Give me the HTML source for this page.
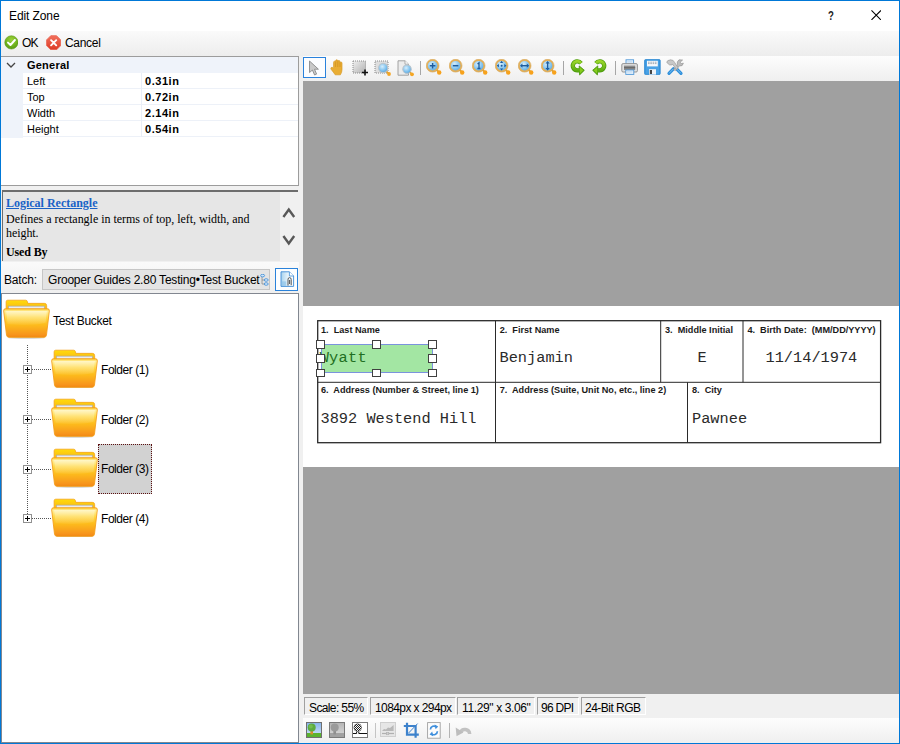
<!DOCTYPE html>
<html lang="en">
<head>
<meta charset="utf-8">
<title>Edit Zone</title>
<style>
html,body{margin:0;padding:0;}
body{width:900px;height:744px;overflow:hidden;background:#fff;font-family:"Liberation Sans",sans-serif;font-size:12px;color:#000;}
#win{position:absolute;left:0;top:0;width:900px;height:744px;background:#fff;overflow:hidden;}
#win div,#win span,#win svg{position:absolute;}
.t{white-space:nowrap;line-height:1;}
/* window frame */
#bl{left:0;top:0;width:1.35px;height:744px;background:#0078d7;}
#br{left:898.65px;top:0;width:1.35px;height:744px;background:#0078d7;}
#bt{left:0;top:0;width:900px;height:1.3px;background:#0078d7;}
#bb{left:0;top:742.7px;width:900px;height:1.3px;background:#0078d7;}
/* main toolbar */
#tb1{left:1px;top:31px;width:898px;height:25px;background:linear-gradient(#fafafa,#ededed);}
/* left pane */
#left{left:1px;top:56px;width:302px;height:687px;background:#f0f0f0;}
#pgrid{left:0;top:0;width:297px;height:128px;border:1px solid #9c9c9c;border-left:none;background:#fff;}
#pgrid .hdr{left:0;top:0;width:297px;height:16px;background:#eff3fa;}
#pgrid .ind{left:0;top:16px;width:22px;height:65px;background:#eff3fa;}
#pgrid .row{left:22px;width:275px;height:15px;border-bottom:1px solid #edf1f8;}
#pgrid .vs{left:140px;top:16px;width:1px;height:64px;background:#e9eef7;}
#pgrid .n{font-size:11px;left:26px;}
#pgrid .v{font-size:11px;left:144px;font-weight:bold;letter-spacing:0.55px;}
/* help */
#help{left:1px;top:134px;width:295.5px;height:71px;background:#e6e6e6;border-top:2px solid #6d6d6d;border-left:1px solid #6d6d6d;box-sizing:border-box;}
#help .sb{left:277px;top:0;width:18px;height:69px;background:#f0f0f0;}
#help .t{font-family:"Liberation Serif",serif;font-size:12px;}
/* batch */
#combo{left:41px;top:213px;width:228px;height:21px;box-sizing:border-box;border:1px solid #c6c6c6;background:#e4e4e4;overflow:hidden;}
#bbtn{left:274px;top:212px;width:23px;height:23px;box-sizing:border-box;border:1px solid #2a82da;background:#fdfeff;}
/* tree */
#tree{left:0px;top:237px;width:296px;height:448px;background:#fff;border:1px solid #828790;}
.tl{font-size:12px;}
.exp{width:9px;height:9px;box-sizing:border-box;border:1px solid #919191;background:#fff;}
.vdot{width:1px;background:repeating-linear-gradient(to bottom,#555 0 1px,transparent 1px 2px);}
.hdot{height:1px;background:repeating-linear-gradient(to right,#555 0 1px,transparent 1px 2px);}
.sel{box-sizing:border-box;background:#d2d2d2;border:1px dotted #5a1010;}
/* viewer */
#vtb{left:303px;top:56px;width:596px;height:24.6px;background:linear-gradient(#fdfdfd,#efefef);}
#view{left:303px;top:80.6px;width:596px;height:613.4px;background:#a0a0a0;}
#doc{left:0;top:225.4px;width:596px;height:161px;background:#fff;}
#status{left:303px;top:694px;width:596px;height:24px;background:#f0f0f0;}
#status .p{top:3px;height:18px;box-sizing:border-box;border:1px solid;border-color:#a0a0a0 #fff #fff #a0a0a0;}
#status .t{top:8px;font-size:12px;}
#btb{left:303px;top:718px;width:596px;height:25px;background:linear-gradient(#fdfdfd,#efefef);}
.lbl{font-weight:bold;font-size:9.15px;color:#1a1a1a;}
.hd{width:8.6px;height:8.6px;box-sizing:border-box;background:#fff;border:1.1px solid #404040;}
.ocr{font-family:"Liberation Mono",monospace;font-size:15.3px;color:#2a2a2a;}
#title{letter-spacing:-0.097px;}
#ok{letter-spacing:-0.922px;}
#cancel{letter-spacing:-0.310px;}
#gen{letter-spacing:0.219px;}
#h1{letter-spacing:-0.009px;}
#h2{letter-spacing:-0.021px;}
#h3{letter-spacing:-0.071px;}
#h4{letter-spacing:-0.121px;}
#batch{letter-spacing:-0.205px;}
#cbt{letter-spacing:-0.204px;}
#s1{letter-spacing:-0.620px;}
#s2{letter-spacing:-0.588px;}
#s3{letter-spacing:-0.371px;}
#s4{letter-spacing:-0.698px;}
#s5{letter-spacing:-0.519px;}
#tb_root{letter-spacing:-0.321px;}
#tf1{letter-spacing:-0.452px;}
#tf2{letter-spacing:-0.452px;}
#tf3{letter-spacing:-0.452px;}
#tf4{letter-spacing:-0.452px;}
</style>
</head>
<body>
<div id="win">
  <!-- title bar -->
  <span class="t" id="title" style="left:9px;top:10px;font-size:12px;">Edit Zone</span>
  <span class="t" id="qm" style="left:828px;top:9.5px;font-size:12px;font-weight:bold;transform:scaleX(0.8);transform-origin:0 0;color:#222">?</span>
  <svg id="xbtn" style="left:871px;top:9.8px;" width="10.4" height="10.4" viewBox="0 0 11 11"><path d="M0.5 0.5 L10.5 10.5 M10.5 0.5 L0.5 10.5" stroke="#000" stroke-width="1.1" fill="none"/></svg>

  <div id="tb1">
    <svg style="left:2.6px;top:4.4px" width="14.8" height="14.8" viewBox="0 0 16 16"><defs><radialGradient id="gok" cx="0.5" cy="0.3" r="0.8"><stop offset="0" stop-color="#9bd13a"/><stop offset="0.6" stop-color="#6db01c"/><stop offset="1" stop-color="#4e8f10"/></radialGradient></defs><circle cx="8" cy="8" r="7.2" fill="url(#gok)" stroke="#5a9a14" stroke-width="0.6"/><path d="M4.3 8.2 L7 10.8 L11.8 5.4" fill="none" stroke="#fff" stroke-width="2.1" stroke-linecap="round" stroke-linejoin="round"/></svg>
    <span class="t" id="ok" style="left:21px;top:5.5px;">OK</span>
    <svg style="left:44.7px;top:3.5px" width="15.3" height="15.5" viewBox="0 0 16 16"><defs><linearGradient id="gcn" x1="0" y1="0" x2="0" y2="1"><stop offset="0" stop-color="#f2705c"/><stop offset="1" stop-color="#dc3b26"/></linearGradient></defs><path d="M5 0.6 H11 L15.4 5 V11 L11 15.4 H5 L0.6 11 V5 Z" fill="url(#gcn)" stroke="#e9604d" stroke-width="0.8"/><path d="M5.3 5.3 L10.7 10.7 M10.7 5.3 L5.3 10.7" stroke="#fff" stroke-width="2" stroke-linecap="round"/></svg>
    <span class="t" id="cancel" style="left:64px;top:5.5px;">Cancel</span>
  </div>

  <div id="left">
    <div id="pgrid">
      <div class="hdr"></div><div class="ind"></div>
      <div class="row" style="top:16px"></div><div class="row" style="top:32px"></div><div class="row" style="top:48px"></div><div class="row" style="top:64px"></div>
      <div class="vs"></div>
      <svg style="left:5px;top:5px" width="10" height="7" viewBox="0 0 10 7"><path d="M1 1 L5 5 L9 1" fill="none" stroke="#444" stroke-width="1.3"/></svg>
      <span class="t" id="gen" style="left:26px;top:3px;font-size:11px;font-weight:bold;">General</span>
      <span class="t n" style="top:19px">Left</span><span class="t v" style="top:19px">0.31in</span>
      <span class="t n" style="top:35px">Top</span><span class="t v" style="top:35px">0.72in</span>
      <span class="t n" style="top:51px">Width</span><span class="t v" style="top:51px">2.14in</span>
      <span class="t n" style="top:67px">Height</span><span class="t v" style="top:67px">0.54in</span>
    </div>
    <div id="help">
      <div class="sb"></div>
      <svg style="left:277px;top:0" width="18" height="69" viewBox="0 0 18 69"><path d="M3.4 25 L8.8 17.6 L14.2 25 M3.4 44 L8.8 51.4 L14.2 44" fill="none" stroke="#585858" stroke-width="2.4"/></svg>
      <span class="t" id="h1" style="left:3px;top:5px;font-weight:bold;color:#1a62c6;text-decoration:underline;">Logical Rectangle</span>
      <span class="t" id="h2" style="left:3px;top:21px;">Defines a rectangle in terms of top, left, width, and</span>
      <span class="t" id="h3" style="left:3px;top:35px;">height.</span>
      <span class="t" id="h4" style="left:3px;top:54px;font-weight:bold;">Used By</span>
    </div>
    <div style="left:0;top:206px;width:298px;height:31px;background:linear-gradient(#fafafa,#efefef)"></div>
    <span class="t" id="batch" style="left:3px;top:218px;">Batch:</span>
    <div id="combo"><span class="t" id="cbt" style="left:5px;top:4px;">Grooper Guides 2.80 Testing•Test Bucket</span>
      <svg style="left:216.5px;top:3.5px" width="9" height="12" viewBox="0 0 9 12"><path d="M2 2.2 V10 H5 M2 6 H5" fill="none" stroke="#8a8a8a" stroke-width="0.8"/><ellipse cx="2.6" cy="1.6" rx="2" ry="1.3" fill="#cfe6fa" stroke="#3d8bd6" stroke-width="0.8"/><ellipse cx="6.2" cy="6" rx="2" ry="1.3" fill="#cfe6fa" stroke="#3d8bd6" stroke-width="0.8"/><ellipse cx="6.2" cy="10" rx="2" ry="1.3" fill="#cfe6fa" stroke="#3d8bd6" stroke-width="0.8"/></svg>
    </div>
    <div id="bbtn"><svg style="left:3.5px;top:1.8px" width="15" height="17" viewBox="0 0 15 17"><defs><linearGradient id="pg" x1="0" y1="0" x2="1" y2="0"><stop offset="0" stop-color="#a9d3ee"/><stop offset="0.55" stop-color="#e6f3fb"/><stop offset="1" stop-color="#ffffff"/></linearGradient></defs><path d="M1 0.8 H9.4 L13.6 5 V15.4 H1 Z" fill="url(#pg)" stroke="#3d8bd6" stroke-width="0.9"/><path d="M9.4 0.8 V5 H13.6" fill="#fff" stroke="#3d8bd6" stroke-width="0.8"/><rect x="1.6" y="10.4" width="4.6" height="4.4" fill="#8fc3e8" opacity="0.7"/><path d="M8 14.6 V8.6 Q8 6.6 9.6 6.6 Q11.2 6.6 11.2 8.6 V14.2 M9.6 13 V9" fill="none" stroke="#555" stroke-width="1"/></svg></div>
    <div id="tree">
<svg style="left:1.2999999999999998px;top:4.899999999999977px" width="47" height="39.7" viewBox="0 0 48 40" preserveAspectRatio="none">
<defs>
<linearGradient id="fb" x1="0" y1="0" x2="0" y2="1"><stop offset="0" stop-color="#ffdc0a"/><stop offset="1" stop-color="#f9a81a"/></linearGradient>
<linearGradient id="ff" x1="0" y1="0" x2="0" y2="1"><stop offset="0" stop-color="#ffc928"/><stop offset="0.09" stop-color="#fff0a0"/><stop offset="0.3" stop-color="#ffd94a"/><stop offset="0.55" stop-color="#fdbd1c"/><stop offset="0.92" stop-color="#f7931c"/><stop offset="1" stop-color="#f0860f"/></linearGradient>
<linearGradient id="fg" x1="0" y1="0" x2="0" y2="1"><stop offset="0" stop-color="#fff" stop-opacity="0.4"/><stop offset="1" stop-color="#fff" stop-opacity="0.05"/></linearGradient>
</defs>
<ellipse cx="24" cy="39" rx="19" ry="1.1" fill="#b9b9b9" opacity="0.7"/>
<path d="M4.8 1.2 H23 Q24.6 1.2 24.9 2.6 L25.3 4.4 H42.3 Q44.6 4.4 44.6 6.8 V14 H3.2 V2.8 Q3.2 1.2 4.8 1.2 Z" fill="url(#fb)" stroke="#f3a21a" stroke-width="0.8"/>
<rect x="5.6" y="7.2" width="36.6" height="4" fill="#ececec" stroke="#a9a9a9" stroke-width="0.7"/>
<path d="M2.6 9.8 H45.4 Q47.6 9.8 47.3 12 L44.4 36.4 Q44.1 38.6 41.9 38.6 H6.1 Q3.9 38.6 3.6 36.4 L0.7 12 Q0.4 9.8 2.6 9.8 Z" fill="url(#ff)" stroke="#f59e1a" stroke-width="0.9"/>
<path d="M3.2 12 H44.8 L43.4 24 Q30 27.5 4.8 25.5 Z" fill="url(#fg)"/>
</svg>
<span class="t tl" id="tb_root" style="left:51px;top:20.5px">Test Bucket</span>
<div class="vdot" style="left:25px;top:51px;height:173px"></div>
<div class="hdot" style="left:30px;top:75.40000000000003px;width:19px"></div>
<div class="exp" style="left:21.0px;top:71.40000000000003px"></div><div style="left:23.0px;top:75.40000000000003px;width:5px;height:1px;background:#000"></div><div style="left:25.0px;top:73.40000000000003px;width:1px;height:5px;background:#000"></div>
<svg style="left:48.6px;top:54.60000000000002px" width="47" height="39.7" viewBox="0 0 48 40" preserveAspectRatio="none">
<defs>
<linearGradient id="fb" x1="0" y1="0" x2="0" y2="1"><stop offset="0" stop-color="#ffdc0a"/><stop offset="1" stop-color="#f9a81a"/></linearGradient>
<linearGradient id="ff" x1="0" y1="0" x2="0" y2="1"><stop offset="0" stop-color="#ffc928"/><stop offset="0.09" stop-color="#fff0a0"/><stop offset="0.3" stop-color="#ffd94a"/><stop offset="0.55" stop-color="#fdbd1c"/><stop offset="0.92" stop-color="#f7931c"/><stop offset="1" stop-color="#f0860f"/></linearGradient>
<linearGradient id="fg" x1="0" y1="0" x2="0" y2="1"><stop offset="0" stop-color="#fff" stop-opacity="0.4"/><stop offset="1" stop-color="#fff" stop-opacity="0.05"/></linearGradient>
</defs>
<ellipse cx="24" cy="39" rx="19" ry="1.1" fill="#b9b9b9" opacity="0.7"/>
<path d="M4.8 1.2 H23 Q24.6 1.2 24.9 2.6 L25.3 4.4 H42.3 Q44.6 4.4 44.6 6.8 V14 H3.2 V2.8 Q3.2 1.2 4.8 1.2 Z" fill="url(#fb)" stroke="#f3a21a" stroke-width="0.8"/>
<rect x="5.6" y="7.2" width="36.6" height="4" fill="#ececec" stroke="#a9a9a9" stroke-width="0.7"/>
<path d="M2.6 9.8 H45.4 Q47.6 9.8 47.3 12 L44.4 36.4 Q44.1 38.6 41.9 38.6 H6.1 Q3.9 38.6 3.6 36.4 L0.7 12 Q0.4 9.8 2.6 9.8 Z" fill="url(#ff)" stroke="#f59e1a" stroke-width="0.9"/>
<path d="M3.2 12 H44.8 L43.4 24 Q30 27.5 4.8 25.5 Z" fill="url(#fg)"/>
</svg>
<span class="t tl" id="tf1" style="left:99px;top:69.90000000000003px">Folder (1)</span>
<div class="hdot" style="left:30px;top:125.05000000000001px;width:19px"></div>
<div class="exp" style="left:21.0px;top:121.05000000000001px"></div><div style="left:23.0px;top:125.05000000000001px;width:5px;height:1px;background:#000"></div><div style="left:25.0px;top:123.05000000000001px;width:1px;height:5px;background:#000"></div>
<svg style="left:48.6px;top:104.25px" width="47" height="39.7" viewBox="0 0 48 40" preserveAspectRatio="none">
<defs>
<linearGradient id="fb" x1="0" y1="0" x2="0" y2="1"><stop offset="0" stop-color="#ffdc0a"/><stop offset="1" stop-color="#f9a81a"/></linearGradient>
<linearGradient id="ff" x1="0" y1="0" x2="0" y2="1"><stop offset="0" stop-color="#ffc928"/><stop offset="0.09" stop-color="#fff0a0"/><stop offset="0.3" stop-color="#ffd94a"/><stop offset="0.55" stop-color="#fdbd1c"/><stop offset="0.92" stop-color="#f7931c"/><stop offset="1" stop-color="#f0860f"/></linearGradient>
<linearGradient id="fg" x1="0" y1="0" x2="0" y2="1"><stop offset="0" stop-color="#fff" stop-opacity="0.4"/><stop offset="1" stop-color="#fff" stop-opacity="0.05"/></linearGradient>
</defs>
<ellipse cx="24" cy="39" rx="19" ry="1.1" fill="#b9b9b9" opacity="0.7"/>
<path d="M4.8 1.2 H23 Q24.6 1.2 24.9 2.6 L25.3 4.4 H42.3 Q44.6 4.4 44.6 6.8 V14 H3.2 V2.8 Q3.2 1.2 4.8 1.2 Z" fill="url(#fb)" stroke="#f3a21a" stroke-width="0.8"/>
<rect x="5.6" y="7.2" width="36.6" height="4" fill="#ececec" stroke="#a9a9a9" stroke-width="0.7"/>
<path d="M2.6 9.8 H45.4 Q47.6 9.8 47.3 12 L44.4 36.4 Q44.1 38.6 41.9 38.6 H6.1 Q3.9 38.6 3.6 36.4 L0.7 12 Q0.4 9.8 2.6 9.8 Z" fill="url(#ff)" stroke="#f59e1a" stroke-width="0.9"/>
<path d="M3.2 12 H44.8 L43.4 24 Q30 27.5 4.8 25.5 Z" fill="url(#fg)"/>
</svg>
<span class="t tl" id="tf2" style="left:99px;top:119.55000000000001px">Folder (2)</span>
<div class="hdot" style="left:30px;top:174.70000000000005px;width:19px"></div>
<div class="exp" style="left:21.0px;top:170.70000000000005px"></div><div style="left:23.0px;top:174.70000000000005px;width:5px;height:1px;background:#000"></div><div style="left:25.0px;top:172.70000000000005px;width:1px;height:5px;background:#000"></div>
<div class="sel" style="left:96px;top:150px;width:54px;height:50px"></div>
<svg style="left:48.6px;top:153.90000000000003px" width="47" height="39.7" viewBox="0 0 48 40" preserveAspectRatio="none">
<defs>
<linearGradient id="fb" x1="0" y1="0" x2="0" y2="1"><stop offset="0" stop-color="#ffdc0a"/><stop offset="1" stop-color="#f9a81a"/></linearGradient>
<linearGradient id="ff" x1="0" y1="0" x2="0" y2="1"><stop offset="0" stop-color="#ffc928"/><stop offset="0.09" stop-color="#fff0a0"/><stop offset="0.3" stop-color="#ffd94a"/><stop offset="0.55" stop-color="#fdbd1c"/><stop offset="0.92" stop-color="#f7931c"/><stop offset="1" stop-color="#f0860f"/></linearGradient>
<linearGradient id="fg" x1="0" y1="0" x2="0" y2="1"><stop offset="0" stop-color="#fff" stop-opacity="0.4"/><stop offset="1" stop-color="#fff" stop-opacity="0.05"/></linearGradient>
</defs>
<ellipse cx="24" cy="39" rx="19" ry="1.1" fill="#b9b9b9" opacity="0.7"/>
<path d="M4.8 1.2 H23 Q24.6 1.2 24.9 2.6 L25.3 4.4 H42.3 Q44.6 4.4 44.6 6.8 V14 H3.2 V2.8 Q3.2 1.2 4.8 1.2 Z" fill="url(#fb)" stroke="#f3a21a" stroke-width="0.8"/>
<rect x="5.6" y="7.2" width="36.6" height="4" fill="#ececec" stroke="#a9a9a9" stroke-width="0.7"/>
<path d="M2.6 9.8 H45.4 Q47.6 9.8 47.3 12 L44.4 36.4 Q44.1 38.6 41.9 38.6 H6.1 Q3.9 38.6 3.6 36.4 L0.7 12 Q0.4 9.8 2.6 9.8 Z" fill="url(#ff)" stroke="#f59e1a" stroke-width="0.9"/>
<path d="M3.2 12 H44.8 L43.4 24 Q30 27.5 4.8 25.5 Z" fill="url(#fg)"/>
</svg>
<span class="t tl" id="tf3" style="left:99px;top:169.20000000000005px">Folder (3)</span>
<div class="hdot" style="left:30px;top:224.35000000000002px;width:19px"></div>
<div class="exp" style="left:21.0px;top:220.35000000000002px"></div><div style="left:23.0px;top:224.35000000000002px;width:5px;height:1px;background:#000"></div><div style="left:25.0px;top:222.35000000000002px;width:1px;height:5px;background:#000"></div>
<svg style="left:48.6px;top:203.55px" width="47" height="39.7" viewBox="0 0 48 40" preserveAspectRatio="none">
<defs>
<linearGradient id="fb" x1="0" y1="0" x2="0" y2="1"><stop offset="0" stop-color="#ffdc0a"/><stop offset="1" stop-color="#f9a81a"/></linearGradient>
<linearGradient id="ff" x1="0" y1="0" x2="0" y2="1"><stop offset="0" stop-color="#ffc928"/><stop offset="0.09" stop-color="#fff0a0"/><stop offset="0.3" stop-color="#ffd94a"/><stop offset="0.55" stop-color="#fdbd1c"/><stop offset="0.92" stop-color="#f7931c"/><stop offset="1" stop-color="#f0860f"/></linearGradient>
<linearGradient id="fg" x1="0" y1="0" x2="0" y2="1"><stop offset="0" stop-color="#fff" stop-opacity="0.4"/><stop offset="1" stop-color="#fff" stop-opacity="0.05"/></linearGradient>
</defs>
<ellipse cx="24" cy="39" rx="19" ry="1.1" fill="#b9b9b9" opacity="0.7"/>
<path d="M4.8 1.2 H23 Q24.6 1.2 24.9 2.6 L25.3 4.4 H42.3 Q44.6 4.4 44.6 6.8 V14 H3.2 V2.8 Q3.2 1.2 4.8 1.2 Z" fill="url(#fb)" stroke="#f3a21a" stroke-width="0.8"/>
<rect x="5.6" y="7.2" width="36.6" height="4" fill="#ececec" stroke="#a9a9a9" stroke-width="0.7"/>
<path d="M2.6 9.8 H45.4 Q47.6 9.8 47.3 12 L44.4 36.4 Q44.1 38.6 41.9 38.6 H6.1 Q3.9 38.6 3.6 36.4 L0.7 12 Q0.4 9.8 2.6 9.8 Z" fill="url(#ff)" stroke="#f59e1a" stroke-width="0.9"/>
<path d="M3.2 12 H44.8 L43.4 24 Q30 27.5 4.8 25.5 Z" fill="url(#fg)"/>
</svg>
<span class="t tl" id="tf4" style="left:99px;top:218.85000000000002px">Folder (4)</span>
</div>
  </div>

  <div id="vtb">
<svg style="left:0;top:0" width="0" height="0"><defs><radialGradient id="lens" cx="0.4" cy="0.35" r="0.75"><stop offset="0" stop-color="#d6eefc"/><stop offset="0.6" stop-color="#7cc0ee"/><stop offset="1" stop-color="#4a9ad8"/></radialGradient><linearGradient id="ggr" x1="0" y1="0" x2="1" y2="1"><stop offset="0" stop-color="#efefef"/><stop offset="1" stop-color="#b2b2b2"/></linearGradient><linearGradient id="grn" x1="0" y1="0" x2="0" y2="1"><stop offset="0" stop-color="#9ad62a"/><stop offset="1" stop-color="#5fae12"/></linearGradient></defs></svg>
<div style="left:0px;top:0.6px;width:23px;height:21.8px;box-sizing:border-box;border:1.25px solid #2a82dc;background:#fcfdff;"></div>
<svg style="left:5.0px;top:3.5px" width="12" height="16" viewBox="0 0 12 16"><path d="M1.5 1 V12.6 L4.4 10 L6.6 15 L8.6 14.1 L6.5 9.2 H10.4 Z" fill="#c9c9c9" stroke="#8a8a8a" stroke-width="0.9" stroke-linejoin="round"/></svg>
<svg style="left:26.5px;top:3.0px" width="15" height="17" viewBox="0 0 15 17"><path d="M3.6 8.6 V3.4 Q3.6 2.2 4.6 2.2 Q5.6 2.2 5.6 3.4 V2 Q5.6 0.8 6.7 0.8 Q7.8 0.8 7.8 2 V2.6 Q7.8 1.5 8.9 1.5 Q10 1.5 10 2.7 V4 Q10 3 11 3 Q12 3 12 4.2 V10.5 Q12 13.5 10.4 15.8 H5.2 Q3.5 13.2 1.2 10.4 Q0.4 9.2 1.3 8.5 Q2.2 7.9 3.1 8.9 Z" fill="#e9ad33" stroke="#d79a25" stroke-width="0.7"/><path d="M5.6 3.4 V8 M7.8 2.6 V8 M10 4 V8" stroke="#c98a1b" stroke-width="0.6" fill="none"/></svg>
<svg style="left:48.5px;top:3.5px" width="17" height="17" viewBox="0 0 17 17"><rect x="1" y="1" width="12.5" height="12" fill="url(#ggr)" stroke="#8a8a8a" stroke-width="1" stroke-dasharray="1 1"/><path d="M13 9.5 V15.5 M10 12.5 H16" stroke="#111" stroke-width="1.6"/></svg>
<svg style="left:71.0px;top:3.5px" width="18" height="17" viewBox="0 0 18 17"><rect x="1" y="1" width="13" height="12" fill="#dedede" stroke="#8a8a8a" stroke-width="1" stroke-dasharray="1 1"/><circle cx="9.2" cy="8" r="4.6" fill="url(#lens)" stroke="#b9c4cc" stroke-width="1.1"/><path d="M12.6 11.6 L14.6 13.6" stroke="#d9a13a" stroke-width="1.6"/><circle cx="15" cy="14" r="1.9" fill="#f5a623"/></svg>
<svg style="left:93.5px;top:3.5px" width="18" height="17" viewBox="0 0 18 17"><path d="M1 0.8 H8 L11.5 4.2 V15.2 H1 Z" fill="#ececec" stroke="#9a9a9a" stroke-width="0.9"/><path d="M8 0.8 V4.2 H11.5" fill="#fff" stroke="#9a9a9a" stroke-width="0.8"/><circle cx="10" cy="9.2" r="4.2" fill="url(#lens)" stroke="#b9c4cc" stroke-width="1.1"/><path d="M13 12.3 L14.6 13.9" stroke="#d9a13a" stroke-width="1.6"/><circle cx="15" cy="14.3" r="1.9" fill="#f5a623"/></svg>
<div style="left:117px;top:4.5px;width:1px;height:14px;background:#a6a6a6"></div>
<svg style="left:123.3px;top:3.0px" width="17" height="17" viewBox="0 0 17 17"><circle cx="6.6" cy="6.7" r="5.6" fill="url(#lens)" stroke="#e4b05a" stroke-width="1.6"/><circle cx="6.6" cy="6.7" r="6.5" fill="none" stroke="#c98f2a" stroke-width="0.4"/><path d="M10.8 11 L12.6 12.8" stroke="#d9a13a" stroke-width="1.8"/><circle cx="13.2" cy="13.5" r="2.2" fill="#f7a21c"/><path d="M3.8 6.7 H9.4 M6.6 3.9 V9.5" stroke="#1d5c9e" stroke-width="1.5"/></svg>
<svg style="left:146.0px;top:3.0px" width="17" height="17" viewBox="0 0 17 17"><circle cx="6.6" cy="6.7" r="5.6" fill="url(#lens)" stroke="#e4b05a" stroke-width="1.6"/><circle cx="6.6" cy="6.7" r="6.5" fill="none" stroke="#c98f2a" stroke-width="0.4"/><path d="M10.8 11 L12.6 12.8" stroke="#d9a13a" stroke-width="1.8"/><circle cx="13.2" cy="13.5" r="2.2" fill="#f7a21c"/><path d="M3.8 6.7 H9.4" stroke="#1d5c9e" stroke-width="1.5"/></svg>
<svg style="left:169.0px;top:3.0px" width="17" height="17" viewBox="0 0 17 17"><circle cx="6.6" cy="6.7" r="5.6" fill="url(#lens)" stroke="#e4b05a" stroke-width="1.6"/><circle cx="6.6" cy="6.7" r="6.5" fill="none" stroke="#c98f2a" stroke-width="0.4"/><path d="M10.8 11 L12.6 12.8" stroke="#d9a13a" stroke-width="1.8"/><circle cx="13.2" cy="13.5" r="2.2" fill="#f7a21c"/><path d="M5.5 5 L7 3.9 V9.5 M5.4 9.5 H8.4" stroke="#1d5c9e" stroke-width="1.3" fill="none"/></svg>
<svg style="left:192.0px;top:3.0px" width="17" height="17" viewBox="0 0 17 17"><circle cx="6.6" cy="6.7" r="5.6" fill="url(#lens)" stroke="#e4b05a" stroke-width="1.6"/><circle cx="6.6" cy="6.7" r="6.5" fill="none" stroke="#c98f2a" stroke-width="0.4"/><path d="M10.8 11 L12.6 12.8" stroke="#d9a13a" stroke-width="1.8"/><circle cx="13.2" cy="13.5" r="2.2" fill="#f7a21c"/><path d="M6.6 1.8 L8.2 4 H5 Z M6.6 11.6 L8.2 9.4 H5 Z M1.7 6.7 L3.9 5.1 V8.3 Z M11.5 6.7 L9.3 5.1 V8.3 Z" fill="#1d5c9e"/><circle cx="6.6" cy="6.7" r="1" fill="#1d5c9e"/></svg>
<svg style="left:214.9px;top:3.0px" width="17" height="17" viewBox="0 0 17 17"><circle cx="6.6" cy="6.7" r="5.6" fill="url(#lens)" stroke="#e4b05a" stroke-width="1.6"/><circle cx="6.6" cy="6.7" r="6.5" fill="none" stroke="#c98f2a" stroke-width="0.4"/><path d="M10.8 11 L12.6 12.8" stroke="#d9a13a" stroke-width="1.8"/><circle cx="13.2" cy="13.5" r="2.2" fill="#f7a21c"/><path d="M2 6.7 L4.4 4.6 V8.8 Z M11.2 6.7 L8.8 4.6 V8.8 Z" fill="#1d5c9e"/><path d="M4 6.7 H9.2" stroke="#1d5c9e" stroke-width="1.4"/></svg>
<svg style="left:237.5px;top:3.0px" width="17" height="17" viewBox="0 0 17 17"><circle cx="6.6" cy="6.7" r="5.6" fill="url(#lens)" stroke="#e4b05a" stroke-width="1.6"/><circle cx="6.6" cy="6.7" r="6.5" fill="none" stroke="#c98f2a" stroke-width="0.4"/><path d="M10.8 11 L12.6 12.8" stroke="#d9a13a" stroke-width="1.8"/><circle cx="13.2" cy="13.5" r="2.2" fill="#f7a21c"/><path d="M6.6 2 L8.7 4.4 H4.5 Z M6.6 11.4 L8.7 9 H4.5 Z" fill="#1d5c9e"/><path d="M6.6 4 V9.4" stroke="#1d5c9e" stroke-width="1.4"/></svg>
<div style="left:260px;top:4.5px;width:1px;height:14px;background:#a6a6a6"></div>
<svg style="left:267.0px;top:3.0px" width="15" height="17" viewBox="0 0 15 17"><path d="M11 4.2 A4.5 4.5 0 1 0 7.3 11.3 H9.6" fill="none" stroke="#4c9a0c" stroke-width="4.3" stroke-linecap="butt"/><path d="M9.2 6.9 L14.3 11.3 L9.6 15.9 Z" fill="#4c9a0c" stroke="#4c9a0c" stroke-width="0.9" stroke-linejoin="round"/><path d="M11 4.2 A4.5 4.5 0 1 0 7.3 11.3 H9.8" fill="none" stroke="url(#grn)" stroke-width="2.9"/><path d="M9.8 8.1 L13.4 11.3 L9.9 14.7 Z" fill="#86cc1c"/></svg>
<svg style="left:289.0px;top:3.0px" width="15" height="17" viewBox="0 0 15 17"><g transform="translate(15 0) scale(-1 1)"><path d="M11 4.2 A4.5 4.5 0 1 0 7.3 11.3 H9.6" fill="none" stroke="#4c9a0c" stroke-width="4.3" stroke-linecap="butt"/><path d="M9.2 6.9 L14.3 11.3 L9.6 15.9 Z" fill="#4c9a0c" stroke="#4c9a0c" stroke-width="0.9" stroke-linejoin="round"/><path d="M11 4.2 A4.5 4.5 0 1 0 7.3 11.3 H9.8" fill="none" stroke="url(#grn)" stroke-width="2.9"/><path d="M9.8 8.1 L13.4 11.3 L9.9 14.7 Z" fill="#86cc1c"/></g></svg>
<div style="left:312px;top:4.5px;width:1px;height:14px;background:#a6a6a6"></div>
<svg style="left:317.5px;top:3.0px" width="17" height="16" viewBox="0 0 17 16"><rect x="5" y="0.8" width="7.6" height="6" fill="#e9f3fc" stroke="#4f97d8" stroke-width="0.9"/><path d="M6.2 2.6 H11.4 M6.2 4 H11.4" stroke="#a9cdee" stroke-width="0.6"/><rect x="0.8" y="4.6" width="15.6" height="8.4" rx="1.3" fill="#e2e2e2" stroke="#8a8a8a" stroke-width="0.9"/><rect x="3" y="6.6" width="11.2" height="4.4" fill="#8c8c8c"/><rect x="3" y="8" width="11.2" height="1.3" fill="#6a6a6a"/><rect x="4.8" y="11" width="8" height="4.4" fill="#eef6fd" stroke="#4f97d8" stroke-width="0.9"/><path d="M6 12.6 H11.6 M6 13.9 H11.6" stroke="#a9cdee" stroke-width="0.6"/></svg>
<svg style="left:340.5px;top:3.0px" width="17" height="16" viewBox="0 0 17 16"><path d="M0.6 1.6 Q0.6 0.6 1.6 0.6 H15.2 Q16.2 0.6 16.2 1.6 V14.6 Q16.2 15.6 15.2 15.6 H1.6 Q0.6 15.6 0.6 14.6 Z" fill="#3b98df" stroke="#2a86d0" stroke-width="0.8"/><rect x="1.8" y="1.6" width="13.2" height="13" fill="#54aaea" opacity="0.55"/><rect x="3" y="1.8" width="10.8" height="5.6" fill="#f6f9fc"/><path d="M4 3.2 H12.8 M4 4.6 H12.8" stroke="#8d98a4" stroke-width="0.8" stroke-dasharray="1.6 0.7"/><rect x="5" y="10.2" width="7" height="5.4" fill="#eef3f8"/><rect x="5.8" y="11" width="2.2" height="4" fill="#444"/></svg>
<svg style="left:363.0px;top:3.0px" width="18" height="16.5" viewBox="0 0 18 16.5"><path d="M3 14.4 L7.4 9.8" stroke="#2e8fdb" stroke-width="3.2" stroke-linecap="round"/><path d="M15 14.4 L10.6 9.8" stroke="#2e8fdb" stroke-width="3.2" stroke-linecap="round"/><path d="M3.4 14 L7 10.2 M14.6 14 L11 10.2" stroke="#86c6f4" stroke-width="0.8" stroke-linecap="round"/><path d="M7.4 10.6 L11.4 5.8 Q10.4 2.6 13 0.8 L16.6 1 L14.2 3.2 L15.2 4.6 L17.4 4.2 Q16.8 7.6 13.2 7 L9.4 11.6 Z" fill="#bdbdbd" stroke="#8e8e8e" stroke-width="0.6"/><path d="M10.6 10.6 L6.6 5.4 Q5.4 6.4 3.4 5.8 L0.7 3.4 L1.8 1.6 L4.6 0.8 Q7.6 0.8 8.6 3.4 L12 8.6 L10.8 10.8 Z" fill="#c8c8c8" stroke="#8e8e8e" stroke-width="0.6"/></svg>
</div>
  <div id="view">
    <div id="doc">
<svg style="left:0;top:0" width="596" height="161" viewBox="0 0 596 161">
<g stroke="#2a2a2a" fill="none">
<rect x="14.7" y="14.7" width="562.9" height="122" stroke-width="1.3"/>
<path d="M14.7 76.3 H577.6 M192.5 14.7 V136.7 M357.7 14.7 V76.3 M440 14.7 V76.3 M384.5 76.3 V136.7" stroke-width="1"/>
</g>
</svg>
<span class="t lbl" id="l1" style="left:18px;top:20.4px">1.&nbsp; Last Name</span>
<span class="t lbl" id="l2" style="left:196.7px;top:20.4px">2.&nbsp; First Name</span>
<span class="t lbl" id="l3" style="left:362px;top:20.4px">3.&nbsp; Middle Initial</span>
<span class="t lbl" id="l4" style="left:444.4px;top:20.4px">4.&nbsp; Birth Date:&nbsp; (MM/DD/YYYY)</span>
<span class="t lbl" id="l6" style="left:18px;top:80.5px">6.&nbsp; Address (Number &amp; Street, line 1)</span>
<span class="t lbl" id="l7" style="left:196.7px;top:80.5px">7.&nbsp; Address (Suite, Unit No, etc., line 2)</span>
<span class="t lbl" id="l8" style="left:389px;top:80.5px">8.&nbsp; City</span>
<span class="t ocr" id="o2" style="left:196.5px;top:44.6px">Benjamin</span>
<span class="t ocr" id="o3" style="left:394.5px;top:44.6px">E</span>
<span class="t ocr" id="o4" style="left:462.5px;top:44.6px">11/14/1974</span>
<span class="t ocr" id="o6" style="left:17.5px;top:105.8px">3892 Westend Hill</span>
<span class="t ocr" id="o8" style="left:389px;top:105.8px">Pawnee</span>
<div id="zone" style="left:17.7px;top:38.3px;width:112px;height:28.7px;box-sizing:border-box;background:#a3e6a3;border:1px solid #7b93dd;"></div>
<span class="t ocr" id="o1" style="left:16.7px;top:45px;color:#1f6f22;letter-spacing:0.25px">Wyatt</span>
<div class="hd" style="left:13.3px;top:34.2px"></div><div class="hd" style="left:69.4px;top:34.2px"></div><div class="hd" style="left:125.2px;top:34.2px"></div><div class="hd" style="left:13.3px;top:48.1px"></div><div class="hd" style="left:125.2px;top:48.1px"></div><div class="hd" style="left:13.3px;top:62.9px"></div><div class="hd" style="left:69.4px;top:62.9px"></div><div class="hd" style="left:125.2px;top:62.9px"></div>

</div>
  </div>
  <div id="status">
    <div class="p" style="left:1px;width:64px"></div><span class="t" id="s1" style="left:6px;">Scale: 55%</span>
    <div class="p" style="left:67px;width:86px"></div><span class="t" id="s2" style="left:72px;">1084px x 294px</span>
    <div class="p" style="left:154px;width:78px"></div><span class="t" id="s3" style="left:159px;">11.29" x 3.06"</span>
    <div class="p" style="left:233.5px;width:42.5px"></div><span class="t" id="s4" style="left:238px;">96 DPI</span>
    <div class="p" style="left:277.5px;width:65px"></div><span class="t" id="s5" style="left:282px;">24-Bit RGB</span>
  </div>
  <div id="btb">
<svg style="left:0;top:0" width="0" height="0"><defs><linearGradient id="sky" x1="0" y1="0" x2="0" y2="1"><stop offset="0" stop-color="#86b2ea"/><stop offset="1" stop-color="#d6e8fa"/></linearGradient><linearGradient id="gsky" x1="0" y1="0" x2="0" y2="1"><stop offset="0" stop-color="#b4b4b4"/><stop offset="1" stop-color="#dedede"/></linearGradient><pattern id="chk" width="2" height="2" patternUnits="userSpaceOnUse"><rect width="2" height="2" fill="#fff"/><rect width="1" height="1" fill="#222"/><rect x="1" y="1" width="1" height="1" fill="#222"/></pattern></defs></svg>
<svg style="left:3.0px;top:4.0px" width="16" height="16" viewBox="0 0 16 16"><rect x="0.5" y="0.5" width="15" height="15" fill="url(#sky)" stroke="#6f6f6f"/><rect x="1" y="11" width="14" height="4" fill="#5cb32e"/><rect x="4.4" y="9" width="2.6" height="3.4" fill="#d98d2b"/><circle cx="5.7" cy="5.6" r="4" fill="#5dab3f"/><circle cx="4.8" cy="4.6" r="2" fill="#79c254" opacity="0.8"/></svg>
<svg style="left:26.0px;top:4.0px" width="16" height="16" viewBox="0 0 16 16"><rect x="0.5" y="0.5" width="15" height="15" fill="url(#gsky)" stroke="#7a7a7a"/><rect x="1" y="11" width="14" height="4" fill="#a2a2a2"/><rect x="4.4" y="9" width="2.6" height="3.4" fill="#8f8f8f"/><circle cx="5.7" cy="5.6" r="4" fill="#9a9a9a"/></svg>
<svg style="left:49.0px;top:4.0px" width="16" height="16" viewBox="0 0 16 16"><rect x="0.5" y="0.5" width="15" height="15" fill="#fff" stroke="#7a7a7a"/><circle cx="5.7" cy="5.6" r="3.8" fill="url(#chk)" stroke="#333" stroke-width="0.5"/><path d="M1 11.5 H4.6 V9.6 M15 11.5 H6.8 V9.6" stroke="#111" stroke-width="1" fill="none"/></svg>
<div style="left:72px;top:5px;width:1px;height:15px;background:#c4c4c4"></div>
<svg style="left:77.0px;top:4.0px" width="16" height="16" viewBox="0 0 16 16"><rect x="0.5" y="0.5" width="15" height="14" fill="#e6e6e6" stroke="#cfcfcf"/><path d="M2 9 L4 7 L6 7.6 L8 5.4 L10 6 L13.6 3 V9 Z" fill="#b8b8b8"/><path d="M2 11.5 H14" stroke="#b0b0b0" stroke-width="1.2"/><rect x="6.4" y="10.4" width="2.4" height="2.4" fill="#d0d0d0" stroke="#aaa" stroke-width="0.5"/></svg>
<svg style="left:100.0px;top:3.5px" width="17" height="17" viewBox="0 0 17 17"><path d="M4 0.8 V12.6 H15.8 M0.8 4 H12.6 V15.8" fill="none" stroke="#3d82cc" stroke-width="2.2"/><path d="M5.6 11 L14.6 1.6" stroke="#3d82cc" stroke-width="1"/></svg>
<svg style="left:123.5px;top:3.5px" width="14" height="17" viewBox="0 0 14 17"><rect x="0.6" y="0.6" width="12.6" height="15.6" fill="#fcfcfc" stroke="#a0a0a0" stroke-width="0.9"/><path d="M3.4 7.6 A3.6 3.6 0 0 1 9.6 5.2" fill="none" stroke="#3f8fdc" stroke-width="1.7"/><path d="M7.6 2.6 L11.2 4.4 L8.6 7.2 Z" fill="#3f8fdc"/><path d="M10.4 9.2 A3.6 3.6 0 0 1 4.2 11.6" fill="none" stroke="#3f8fdc" stroke-width="1.7"/><path d="M6.2 14.2 L2.6 12.4 L5.2 9.6 Z" fill="#3f8fdc"/></svg>
<div style="left:146px;top:5px;width:1px;height:15px;background:#b4b4b4"></div>
<svg style="left:151.5px;top:6.0px" width="17" height="13" viewBox="0 0 17 13"><path d="M5.4 8.6 A4.8 4.8 0 0 1 14.7 10" fill="none" stroke="#c2c2c2" stroke-width="3.4"/><path d="M0.7 3.6 L1.5 12.3 L8.4 8.4 Z" fill="#bdbdbd"/></svg>
</div>

  <div id="bl"></div><div id="br"></div><div id="bt"></div><div id="bb"></div>
</div>
</body>
</html>
